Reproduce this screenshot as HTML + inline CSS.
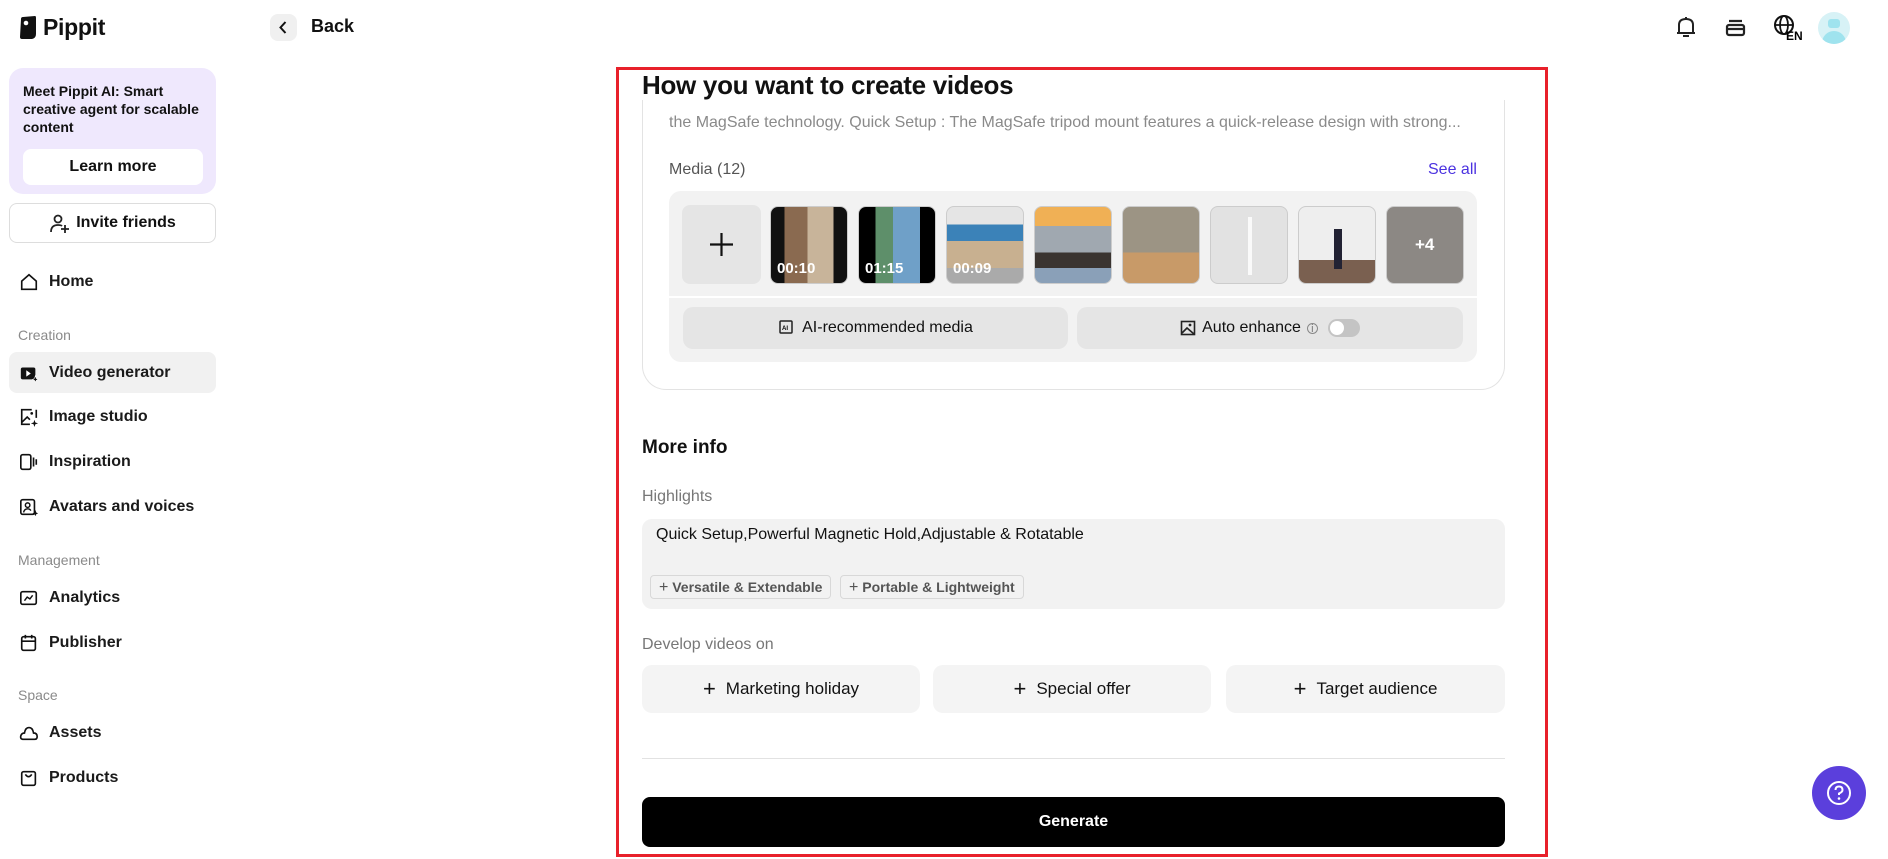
<!DOCTYPE html>
<html><head><meta charset="utf-8"><style>
*{box-sizing:border-box;margin:0;padding:0}
body{width:1888px;height:859px;overflow:hidden;background:#fff;font-family:"Liberation Sans",Arial,sans-serif;color:#111;position:relative}
.a{position:absolute}
.nav{position:absolute;left:19px;font-size:16px;font-weight:bold;color:#1a1a1a;display:flex;align-items:center;gap:0}
.nav svg{width:20px;height:20px;margin-right:10px}
.sec{position:absolute;left:18px;font-size:14px;color:#8a8a8a}
.th{position:absolute;top:206px;width:78px;height:78px;border-radius:8px;border:1px solid #ccc;overflow:hidden}
.th span{position:absolute;left:6px;bottom:6px;color:#fff;font-weight:bold;font-size:15px}
.gbtn{position:absolute;background:#f4f4f4;border-radius:10px;display:flex;align-items:center;justify-content:center;font-size:17px;color:#111}
</style></head><body>
<div class="a" style="left:19px;top:14px;display:flex;align-items:center">
<svg width="18" height="24" viewBox="0 0 18 24"><path d="M2 3 Q2 1 4 1 L16 0 Q17 0 17 2 L17 18 Q17 22 13 23 L3 23 Q1 23 1 21 Z" fill="#111"/><circle cx="7" cy="7" r="2.3" fill="#fff"/></svg>
<span style="font-size:23px;font-weight:bold;margin-left:6px;letter-spacing:-0.3px">Pippit</span></div>
<div class="a" style="left:270px;top:14px;width:27px;height:27px;border-radius:8px;background:#f0f0f0"><svg width="27" height="27" viewBox="0 0 27 27"><path d="M15.5 8 L10.5 13.5 L15.5 19" stroke="#111" stroke-width="2" fill="none"/></svg></div>
<div class="a" style="left:311px;top:16px;font-size:18px;font-weight:bold">Back</div>
<svg class="a" style="left:1673px;top:14px" width="26" height="26" viewBox="0 0 26 26"><path d="M6 19 V11 Q6 5 13 5 Q20 5 20 11 V19 M4 19 H22 M10 22 H16 M13 3 V5" stroke="#222" stroke-width="2" fill="none"/></svg>
<svg class="a" style="left:1722px;top:14px" width="26" height="26" viewBox="0 0 26 26"><rect x="5" y="11" width="17" height="10" rx="2" stroke="#222" stroke-width="2.2" fill="none"/><path d="M7 7 H20 M5 15 H22" stroke="#222" stroke-width="2.2"/></svg>
<svg class="a" style="left:1771px;top:12px" width="36" height="30" viewBox="0 0 36 30"><circle cx="13" cy="13" r="9" stroke="#111" stroke-width="2" fill="none"/><ellipse cx="13" cy="13" rx="4" ry="9" stroke="#111" stroke-width="1.8" fill="none"/><path d="M4 13 H22" stroke="#111" stroke-width="1.8"/><text x="15" y="28" font-family="Liberation Sans" font-weight="bold" font-size="12">EN</text></svg>
<div class="a" style="left:1818px;top:12px;width:32px;height:32px;border-radius:50%;background:#d7f2f6;overflow:hidden"><div class="a" style="left:10px;top:7px;width:12px;height:9px;border-radius:3px;background:#9fe3ee"></div><div class="a" style="left:4px;top:19px;width:24px;height:16px;border-radius:12px 12px 0 0;background:#9fe3ee"></div></div>
<div class="a" style="left:9px;top:68px;width:207px;height:126px;border-radius:14px;background:#efe8fd">
<div class="a" style="left:14px;top:14px;font-size:14px;font-weight:bold;line-height:18px;width:185px">Meet Pippit AI: Smart creative agent for scalable content</div>
<div class="a" style="left:14px;top:81px;width:180px;height:36px;border-radius:8px;background:#fff;text-align:center;line-height:36px;font-size:16px;font-weight:600">Learn more</div></div>
<div class="a" style="left:9px;top:203px;width:207px;height:40px;border:1px solid #ddd;border-radius:8px;display:flex;align-items:center;justify-content:center;font-size:16px;font-weight:600">
<svg width="22" height="22" viewBox="0 0 22 22" style="margin-right:5px"><circle cx="9" cy="7" r="3.5" stroke="#222" stroke-width="1.8" fill="none"/><path d="M2 20 Q2 13 9 13 Q12 13 13 14 M16 13 V21 M12 17 H20" stroke="#222" stroke-width="1.8" fill="none"/></svg>Invite friends</div>
<div class="nav" style="top:272px"><svg viewBox="0 0 22 22"><path d="M3 10 L11 3 L19 10 V19 H3 Z" stroke="#111" stroke-width="1.8" fill="none"/></svg><span>Home</span></div>
<div class="sec" style="top:327px">Creation</div>
<div class="a" style="left:9px;top:352px;width:207px;height:41px;border-radius:8px;background:#f1f1f1"></div>
<div class="nav" style="top:363px"><svg viewBox="0 0 22 22"><rect x="2" y="5" width="16" height="13" rx="2" fill="#111"/><path d="M8 8 L13 11.5 L8 15Z" fill="#fff"/><path d="M18 14 L19 17 L21 18 L19 19 L18 21 L17 19 L15 18 L17 17Z" fill="#111" stroke="#fff" stroke-width=".6"/></svg><span>Video generator</span></div>
<div class="nav" style="top:407px"><svg viewBox="0 0 22 22"><path d="M14 3 H3 V19 H12 M19 3 V12" stroke="#111" stroke-width="1.8" fill="none"/><path d="M3 17 L9 11 L12 14" stroke="#111" stroke-width="1.8" fill="none"/><circle cx="14" cy="7" r="1.5" fill="#111"/><path d="M17 14 L18 17 L21 18 L18 19 L17 22 L16 19 L13 18 L16 17Z" fill="#111"/></svg><span>Image studio</span></div>
<div class="nav" style="top:452px"><svg viewBox="0 0 22 22"><rect x="2" y="3" width="11" height="16" rx="2" stroke="#111" stroke-width="1.8" fill="none"/><path d="M16 6 V16 M19 8 V14" stroke="#111" stroke-width="1.8"/></svg><span>Inspiration</span></div>
<div class="nav" style="top:497px"><svg viewBox="0 0 22 22"><rect x="2" y="3" width="15" height="16" rx="2" stroke="#111" stroke-width="1.8" fill="none"/><circle cx="9.5" cy="9" r="2.5" stroke="#111" stroke-width="1.6" fill="none"/><path d="M5 17 Q6 13 9.5 13 Q12 13 13 15" stroke="#111" stroke-width="1.6" fill="none"/><path d="M18 14 L19 17 L21 18 L19 19 L18 21 L17 19 L15 18 L17 17Z" fill="#111"/></svg><span>Avatars and voices</span></div>
<div class="sec" style="top:552px">Management</div>
<div class="nav" style="top:588px"><svg viewBox="0 0 22 22"><rect x="2" y="4" width="17" height="14" rx="2" stroke="#111" stroke-width="1.8" fill="none"/><path d="M6 14 L9 10 L12 12 L15 8" stroke="#111" stroke-width="1.6" fill="none"/></svg><span>Analytics</span></div>
<div class="nav" style="top:633px"><svg viewBox="0 0 22 22"><rect x="3" y="4" width="15" height="15" rx="2" stroke="#111" stroke-width="1.8" fill="none"/><path d="M3 9 H18 M7 2 V6 M14 2 V6" stroke="#111" stroke-width="1.8"/></svg><span>Publisher</span></div>
<div class="sec" style="top:687px">Space</div>
<div class="nav" style="top:723px"><svg viewBox="0 0 22 22"><path d="M5 18 Q1 18 2 14 Q3 11 6 11 Q7 5 11 5 Q15 5 16 11 Q20 11 20 15 Q20 18 17 18 Z" stroke="#111" stroke-width="1.8" fill="none"/></svg><span>Assets</span></div>
<div class="nav" style="top:768px"><svg viewBox="0 0 22 22"><rect x="3" y="4" width="15" height="15" rx="2" stroke="#111" stroke-width="1.8" fill="none"/><path d="M7 7 Q10.5 12 14 7" stroke="#111" stroke-width="1.8" fill="none"/></svg><span>Products</span></div>
<div class="a" style="left:616px;top:67px;width:932px;height:790px;border:3px solid #e8202a"></div>
<div class="a" style="left:642px;top:70px;font-size:26px;font-weight:bold;letter-spacing:-0.3px">How you want to create videos</div>
<div class="a" style="left:642px;top:100px;width:863px;height:290px;border:1px solid #e3e3e3;border-top:none;border-radius:0 0 24px 24px"></div>
<div class="a" style="left:669px;top:114px;width:808px;font-size:16px;color:#8a8a8a;white-space:nowrap;overflow:hidden">the MagSafe technology. Quick Setup : The MagSafe tripod mount features a quick-release design with strong...</div>
<div class="a" style="left:669px;top:161px;font-size:16px;color:#555">Media (12)</div>
<div class="a" style="left:1428px;top:161px;font-size:16px;color:#4b32e0">See all</div>
<div class="a" style="left:669px;top:191px;width:808px;height:171px;border-radius:12px;background:#f2f2f2"></div>
<div class="a" style="left:669px;top:296px;width:808px;height:2px;background:#fff"></div>
<div class="a" style="left:682px;top:205px;width:79px;height:79px;border-radius:8px;background:#e5e5e5"><svg width="79" height="79"><path d="M39.5 28 V51 M28 39.5 H51" stroke="#111" stroke-width="2.2"/></svg></div>
<div class="th" style="left:770px;background:linear-gradient(90deg,#111 0 18%,#8a6a50 18% 48%,#c8b49a 48% 82%,#111 82%)"><span>00:10</span></div>
<div class="th" style="left:858px;background:linear-gradient(90deg,#000 0 22%,#5e8f6a 22% 45%,#6fa0c8 45% 80%,#000 80%)"><span>01:15</span></div>
<div class="th" style="left:946px;background:linear-gradient(180deg,#e5e5e5 0 23%,#3b82b8 23% 45%,#c8b090 45% 80%,#aaa 80%)"><span>00:09</span></div>
<div class="th" style="left:1034px;background:linear-gradient(180deg,#f0b055 0 25%,#a0a8b0 25% 60%,#3a3430 60% 80%,#8aa0b8 80%)"></div>
<div class="th" style="left:1122px;background:linear-gradient(180deg,#9c9484 0 60%,#c89a68 60%)"></div>
<div class="th" style="left:1210px;background:#e2e2e2"><div class="a" style="left:37px;top:10px;width:4px;height:58px;background:#fafafa"></div></div>
<div class="th" style="left:1298px;background:linear-gradient(180deg,#eee 0 70%,#7a6050 70%)"><div class="a" style="left:35px;top:22px;width:8px;height:40px;background:#223"></div></div>
<div class="th" style="left:1386px;background:#8c8884"><span style="left:28px;bottom:28px;font-size:17px">+4</span></div>
<div class="gbtn" style="left:683px;top:307px;width:385px;height:42px;background:#e5e5e5;font-size:16px"><svg width="18" height="18" viewBox="0 0 18 18" style="margin-right:6px"><rect x="2" y="2" width="12" height="12" rx="1" stroke="#222" stroke-width="1.5" fill="none"/><text x="4" y="11" font-size="6" font-family="Liberation Sans" font-weight="bold">AI</text></svg>AI-recommended media</div>
<div class="gbtn" style="left:1077px;top:307px;width:386px;height:42px;background:#e5e5e5;font-size:16px"><svg width="16" height="16" viewBox="0 0 16 16" style="margin-right:6px"><rect x="1.5" y="1.5" width="13" height="13" stroke="#222" stroke-width="1.6" fill="none"/><path d="M2 13 L7 8 L14 14" stroke="#222" stroke-width="1.6" fill="none"/><circle cx="10" cy="5" r="1.4" fill="#222"/></svg>Auto enhance<span style="font-size:11px;color:#777;margin:0 10px 0 6px;border:1px solid #888;border-radius:50%;width:11px;height:11px;line-height:10px;text-align:center">i</span><span style="width:32px;height:18px;border-radius:9px;background:#c4c4c4;position:relative"><span class="a" style="left:2px;top:2px;width:14px;height:14px;border-radius:50%;background:#fff"></span></span></div>
<div class="a" style="left:642px;top:437px;font-size:19px;font-weight:bold">More info</div>
<div class="a" style="left:642px;top:488px;font-size:16px;color:#777">Highlights</div>
<div class="a" style="left:642px;top:519px;width:863px;height:90px;border-radius:10px;background:#f2f2f2"></div>
<div class="a" style="left:656px;top:526px;font-size:16px">Quick Setup,Powerful Magnetic Hold,Adjustable &amp; Rotatable</div>
<div class="a" style="left:650px;top:575px;width:181px;height:24px;border:1px solid #d8d8d8;border-radius:4px;font-size:14px;color:#555;font-weight:600;line-height:22px;padding-left:8px"><span style="font-weight:normal;font-size:16px">+</span> Versatile &amp; Extendable</div>
<div class="a" style="left:840px;top:575px;width:184px;height:24px;border:1px solid #d8d8d8;border-radius:4px;font-size:14px;color:#555;font-weight:600;line-height:22px;padding-left:8px"><span style="font-weight:normal;font-size:16px">+</span> Portable &amp; Lightweight</div>
<div class="a" style="left:642px;top:636px;font-size:16px;color:#777">Develop videos on</div>
<div class="gbtn" style="left:642px;top:665px;width:278px;height:48px"><span style="font-size:22px;margin-right:10px;font-weight:300">+</span>Marketing holiday</div>
<div class="gbtn" style="left:933px;top:665px;width:278px;height:48px"><span style="font-size:22px;margin-right:10px;font-weight:300">+</span>Special offer</div>
<div class="gbtn" style="left:1226px;top:665px;width:279px;height:48px"><span style="font-size:22px;margin-right:10px;font-weight:300">+</span>Target audience</div>
<div class="a" style="left:642px;top:758px;width:863px;height:1px;background:#e2e2e2"></div>
<div class="a" style="left:642px;top:797px;width:863px;height:50px;border-radius:8px;background:#000;color:#fff;text-align:center;line-height:50px;font-size:16px;font-weight:bold">Generate</div>
<div class="a" style="left:1812px;top:766px;width:54px;height:54px;border-radius:50%;background:#5b3fdc"><svg width="54" height="54"><circle cx="27" cy="27" r="11" stroke="#fff" stroke-width="2" fill="none"/><path d="M23.5 24 Q23.5 20.5 27 20.5 Q30.5 20.5 30.5 24 Q30.5 26 27 27.5 V29" stroke="#fff" stroke-width="2" fill="none"/><circle cx="27" cy="32.5" r="1.3" fill="#fff"/></svg></div>
</body></html>
